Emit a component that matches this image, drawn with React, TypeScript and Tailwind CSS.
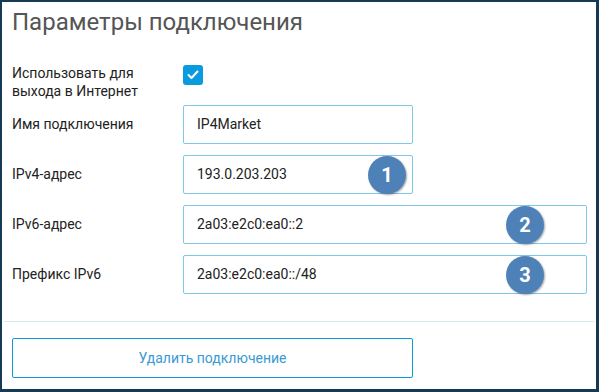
import React from 'react';

const Badge: React.FC<{ n: number; left: string }> = ({ n, left }) => (
  <div
    className={`absolute top-[0px] ${left} w-[38px] h-[38px] rounded-full bg-[#4f81b9] shadow-[1px_1px_2px_rgba(0,0,0,0.35)] flex items-center justify-center text-white font-bold text-[20px]`}
  >
    {n}
  </div>
);

const fields = [
  { label: 'Имя подключения', value: 'IP4Market', wide: false, badge: 0 },
  { label: 'IPv4-адрес', value: '193.0.203.203', wide: false, badge: 1 },
  { label: 'IPv6-адрес', value: '2a03:e2c0:ea0::2', wide: true, badge: 2 },
  { label: 'Префикс IPv6', value: '2a03:e2c0:ea0::/48', wide: true, badge: 3 },
];

const App: React.FC = () => {
  return (
    <div className="w-[599px] h-[392px] bg-white border-2 border-r-[3px] border-b-[3px] border-[#163a54] flex flex-col font-['Roboto',sans-serif] text-[#222]">
      {/* Title */}
      <h1 className="pl-[10px] pt-[4px] text-[24px] leading-[32px] text-[#555]">Параметры подключения</h1>

      {/* Form */}
      <div className="mt-[26px] pl-[10px] flex flex-col">
        <div className="flex">
          <div className="w-[171px] text-[14px] leading-[18px]">
            Использовать для
            <br />
            выхода в Интернет
          </div>
          <div className="mt-px w-[20px] h-[20px] rounded-[3px] bg-[#0a9ade] flex items-center justify-center">
            <svg width="12" height="10" viewBox="0 0 12 10" fill="none">
              <path d="M1.5 5l3 3 6-6.5" stroke="white" strokeWidth="2" strokeLinecap="round" strokeLinejoin="round" />
            </svg>
          </div>
        </div>

        <div className="mt-[5px] flex flex-col gap-[11px]">
          {fields.map(f => (
            <div key={f.label} className="flex items-center">
              <div className="w-[171px] text-[14px]">{f.label}</div>
              <div
                className={`relative h-[39px] ${f.wide ? 'w-[404px]' : 'w-[230px]'} border border-[#80c8e8] rounded-[2px] flex items-center pl-[13px] text-[14px]`}
              >
                {f.value}
                {f.badge === 1 && <Badge n={1} left="left-[184px]" />}
                {f.badge === 2 && <Badge n={2} left="left-[322px]" />}
                {f.badge === 3 && <Badge n={3} left="left-[322px]" />}
              </div>
            </div>
          ))}
        </div>
      </div>

      {/* Separator */}
      <div className="mt-[27px] mx-[2px] h-px bg-[#d9e8ef]" />

      {/* Footer */}
      <div className="mt-[16px] pl-[10px]">
        <button className="w-[401px] h-[40px] border border-[#0b9ad6] rounded-[2px] text-[14px] text-[#3a9ad2] bg-white">
          Удалить подключение
        </button>
      </div>
    </div>
  );
};

export default App;
